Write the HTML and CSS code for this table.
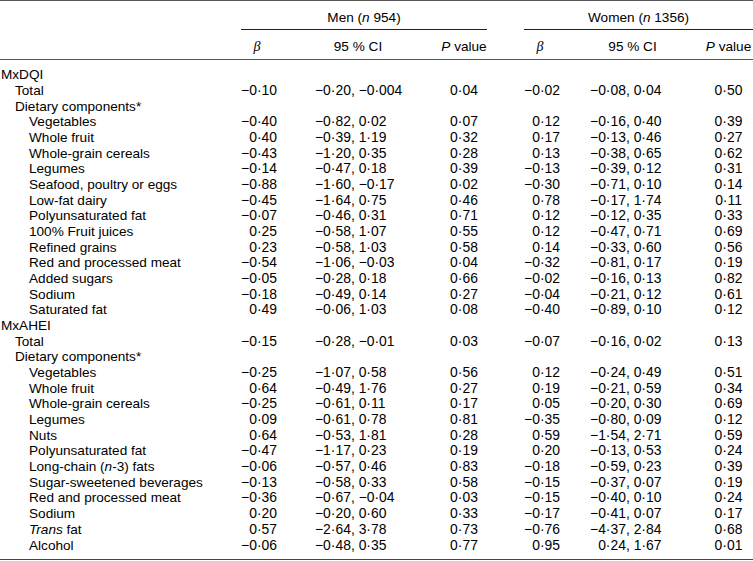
FILE: index.html
```html
<!DOCTYPE html>
<html lang="en">
<head>
<meta charset="utf-8">
<title>Table</title>
<link rel="stylesheet" href="styles.css">
</head>
<body>
<table class="tbl">
<colgroup>
<col class="c-label"><col class="c-b1"><col class="c-ci1"><col class="c-p1"><col class="c-b2"><col class="c-ci2"><col class="c-p2">
</colgroup>
<thead>
<tr class="h1">
<th></th>
<th colspan="3"><div class="grp men">Men (<i>n</i> 954)</div></th>
<th colspan="3"><div class="grp women">Women (<i>n</i> 1356)</div></th>
</tr>
<tr class="h2">
<th></th>
<th class="beta b-men">β</th><th>95 % CI</th><th><i>P</i> value</th>
<th class="beta">β</th><th>95 % CI</th><th><i>P</i> value</th>
</tr>
</thead>
<tbody>
<tr class="first"><td class="l0">MxDQI</td><td></td><td></td><td></td><td></td><td></td><td></td></tr>
<tr><td class="l1">Total</td><td>−0·10</td><td>−0·20, −0·004</td><td>0·04</td><td>−0·02</td><td>−0·08, 0·04</td><td>0·50</td></tr>
<tr><td class="l1">Dietary components*</td><td></td><td></td><td></td><td></td><td></td><td></td></tr>
<tr><td class="l2">Vegetables</td><td>−0·40</td><td>−0·82, 0·02</td><td>0·07</td><td>0·12</td><td>−0·16, 0·40</td><td>0·39</td></tr>
<tr><td class="l2">Whole fruit</td><td>0·40</td><td>−0·39, 1·19</td><td>0·32</td><td>0·17</td><td>−0·13, 0·46</td><td>0·27</td></tr>
<tr><td class="l2">Whole-grain cereals</td><td>−0·43</td><td>−1·20, 0·35</td><td>0·28</td><td>0·13</td><td>−0·38, 0·65</td><td>0·62</td></tr>
<tr><td class="l2">Legumes</td><td>−0·14</td><td>−0·47, 0·18</td><td>0·39</td><td>−0·13</td><td>−0·39, 0·12</td><td>0·31</td></tr>
<tr><td class="l2">Seafood, poultry or eggs</td><td>−0·88</td><td>−1·60, −0·17</td><td>0·02</td><td>−0·30</td><td>−0·71, 0·10</td><td>0·14</td></tr>
<tr><td class="l2">Low-fat dairy</td><td>−0·45</td><td>−1·64, 0·75</td><td>0·46</td><td>0·78</td><td>−0·17, 1·74</td><td>0·11</td></tr>
<tr><td class="l2">Polyunsaturated fat</td><td>−0·07</td><td>−0·46, 0·31</td><td>0·71</td><td>0·12</td><td>−0·12, 0·35</td><td>0·33</td></tr>
<tr><td class="l2">100% Fruit juices</td><td>0·25</td><td>−0·58, 1·07</td><td>0·55</td><td>0·12</td><td>−0·47, 0·71</td><td>0·69</td></tr>
<tr><td class="l2">Refined grains</td><td>0·23</td><td>−0·58, 1·03</td><td>0·58</td><td>0·14</td><td>−0·33, 0·60</td><td>0·56</td></tr>
<tr><td class="l2">Red and processed meat</td><td>−0·54</td><td>−1·06, −0·03</td><td>0·04</td><td>−0·32</td><td>−0·81, 0·17</td><td>0·19</td></tr>
<tr><td class="l2">Added sugars</td><td>−0·05</td><td>−0·28, 0·18</td><td>0·66</td><td>−0·02</td><td>−0·16, 0·13</td><td>0·82</td></tr>
<tr><td class="l2">Sodium</td><td>−0·18</td><td>−0·49, 0·14</td><td>0·27</td><td>−0·04</td><td>−0·21, 0·12</td><td>0·61</td></tr>
<tr><td class="l2">Saturated fat</td><td>0·49</td><td>−0·06, 1·03</td><td>0·08</td><td>−0·40</td><td>−0·89, 0·10</td><td>0·12</td></tr>
<tr><td class="l0">MxAHEI</td><td></td><td></td><td></td><td></td><td></td><td></td></tr>
<tr><td class="l1">Total</td><td>−0·15</td><td>−0·28, −0·01</td><td>0·03</td><td>−0·07</td><td>−0·16, 0·02</td><td>0·13</td></tr>
<tr><td class="l1">Dietary components*</td><td></td><td></td><td></td><td></td><td></td><td></td></tr>
<tr><td class="l2">Vegetables</td><td>−0·25</td><td>−1·07, 0·58</td><td>0·56</td><td>0·12</td><td>−0·24, 0·49</td><td>0·51</td></tr>
<tr><td class="l2">Whole fruit</td><td>0·64</td><td>−0·49, 1·76</td><td>0·27</td><td>0·19</td><td>−0·21, 0·59</td><td>0·34</td></tr>
<tr><td class="l2">Whole-grain cereals</td><td>−0·25</td><td>−0·61, 0·11</td><td>0·17</td><td>0·05</td><td>−0·20, 0·30</td><td>0·69</td></tr>
<tr><td class="l2">Legumes</td><td>0·09</td><td>−0·61, 0·78</td><td>0·81</td><td>−0·35</td><td>−0·80, 0·09</td><td>0·12</td></tr>
<tr><td class="l2">Nuts</td><td>0·64</td><td>−0·53, 1·81</td><td>0·28</td><td>0·59</td><td>−1·54, 2·71</td><td>0·59</td></tr>
<tr><td class="l2">Polyunsaturated fat</td><td>−0·47</td><td>−1·17, 0·23</td><td>0·19</td><td>0·20</td><td>−0·13, 0·53</td><td>0·24</td></tr>
<tr><td class="l2">Long-chain (<i>n</i>-3) fats</td><td>−0·06</td><td>−0·57, 0·46</td><td>0·83</td><td>−0·18</td><td>−0·59, 0·23</td><td>0·39</td></tr>
<tr><td class="l2">Sugar-sweetened beverages</td><td>−0·13</td><td>−0·58, 0·33</td><td>0·58</td><td>−0·15</td><td>−0·37, 0·07</td><td>0·19</td></tr>
<tr><td class="l2">Red and processed meat</td><td>−0·36</td><td>−0·67, −0·04</td><td>0·03</td><td>−0·15</td><td>−0·40, 0·10</td><td>0·24</td></tr>
<tr><td class="l2">Sodium</td><td>0·20</td><td>−0·20, 0·60</td><td>0·33</td><td>−0·17</td><td>−0·41, 0·07</td><td>0·17</td></tr>
<tr><td class="l2"><i>Trans</i> fat</td><td>0·57</td><td>−2·64, 3·78</td><td>0·73</td><td>−0·76</td><td>−4·37, 2·84</td><td>0·68</td></tr>
<tr class="last"><td class="l2">Alcohol</td><td>−0·06</td><td>−0·48, 0·35</td><td>0·77</td><td>0·95</td><td><span class="ph">−</span>0·24, 1·67</td><td>0·01</td></tr>
</tbody>
</table>
</body>
</html>
```
FILE: styles.css
```css
html, body {
  margin: 0;
  padding: 0;
  background: #fff;
}
body {
  font-family: "Liberation Sans", Arial, sans-serif;
  font-size: 13.6px;
  line-height: 15.67px;
  color: #000;
}
.tbl {
  width: 753px;
  border-collapse: collapse;
  table-layout: fixed;
  border-top: 1px solid #555;
  border-bottom: 1px solid #444;
}
.c-label { width: 230px; }
.c-b1 { width: 55px; }
.c-ci1 { width: 135px; }
.c-p1 { width: 67px; }
.c-b2 { width: 81px; }
.c-ci2 { width: 132px; }
.c-p2 { width: 53px; }

th, td {
  padding: 0;
  font-weight: normal;
  white-space: nowrap;
  vertical-align: middle;
}
td + td {
  font-size: 13.9px;
}
.h1 th {
  padding-top: 9px;
  text-align: center;
}
.grp {
  padding-bottom: 3px;
  border-bottom: 1px solid #222;
}
.grp.men { margin-left: 11px; }
.grp.women { margin-left: 37px; }
.h2 th {
  padding-top: 9px;
  padding-bottom: 5px;
  text-align: center;
  border-bottom: 1px solid #555;
}
.beta {
  font-family: "Liberation Serif", "DejaVu Serif", serif;
  font-style: italic;
  font-size: 14px;
}
.h2 th:nth-child(2), td:nth-child(2) { padding-left: 11px; padding-right: 8px; }
.h2 th.b-men { padding-right: 12px; }
.h2 th:nth-child(3), td:nth-child(3) { padding-left: 30px; padding-right: 19px; }
.h2 th:nth-child(4), td:nth-child(4) { padding-left: 21px; }
.h2 th:nth-child(5), td:nth-child(5) { padding-left: 33px; padding-right: 8px; }
.h2 th:nth-child(6), td:nth-child(6) { padding-left: 22px; padding-right: 25px; }
.h2 th:nth-child(7), td:nth-child(7) { padding-left: 4px; }

td:nth-child(2), td:nth-child(5) { text-align: right; }
td:nth-child(3), td:nth-child(6) { text-align: left; }
td:nth-child(4), td:nth-child(7) { text-align: center; }

.l0 { padding-left: 1px; }
.l1 { padding-left: 15px; }
.l2 { padding-left: 29px; }

tr.first td { padding-top: 7px; }
tr.last td { padding-bottom: 6px; }

.ph { visibility: hidden; }
```
